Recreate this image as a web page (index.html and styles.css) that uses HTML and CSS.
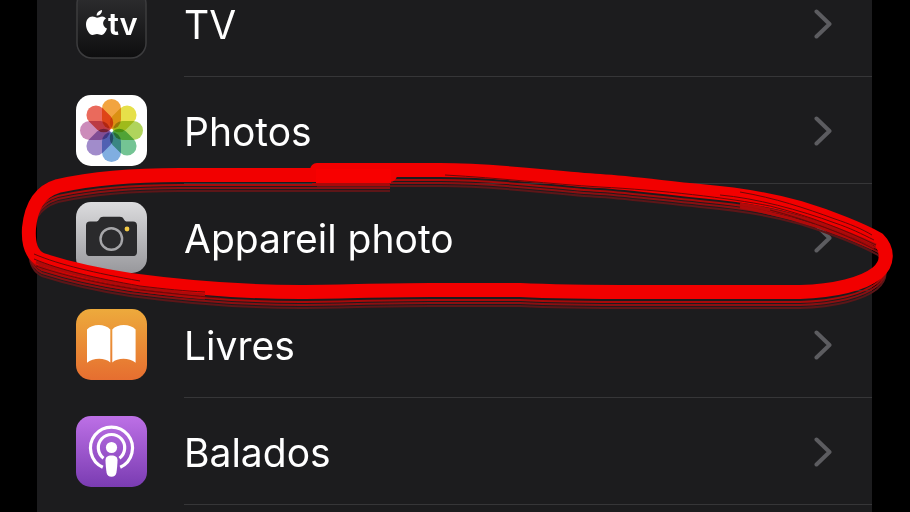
FILE: index.html
```html
<!DOCTYPE html>
<html lang="fr">
<head>
    <meta charset="UTF-8">
    <meta name="viewport" content="width=device-width, initial-scale=1.0">
    <title>Réglages</title>
    <link rel="stylesheet" href="styles.css">
</head>
<body>
    <div id="wrap">
        <ul class="list">
            <!-- TV -->
            <li>
                <a class="row" href="#tv">
                    <svg class="icon" viewBox="0 0 71 71" aria-hidden="true">
                        <defs>
                            <linearGradient id="tvBg" x1="0" y1="0" x2="0" y2="1">
                                <stop offset="0" stop-color="#303032"/>
                                <stop offset="1" stop-color="#0e0e0f"/>
                            </linearGradient>
                        </defs>
                        <rect x="1" y="1" width="69" height="69" rx="15" fill="url(#tvBg)" stroke="#3c3c3e" stroke-width="1.5"/>
                        <path fill="#fff" d="M26 22c.3 3-2.300 5.700-5.300 5.700C20.400 25 23 22.300 26 22zM30 30.500c-4.300 2.500-3.500 8.300 1 10-1.200 3.300-3.300 6.500-5.500 6.500-1.800 0-2.500-1-4.500-1s-2.800 1-4.500 1C13 47 10 41 10 36.600c0-5 3-8.100 6.400-8.100 2 0 3.400 1.200 4.800 1.200 1.300 0 2.800-1.300 5-1.300 1.500 0 2.900.7 3.800 2.100z"/>
                        <text class="tv-mark" x="32" y="47">tv</text>
                    </svg>
                    <span class="label">TV</span>
                    <svg class="arrow" viewBox="0 0 18 30" aria-hidden="true"><path d="M2.500 2.500L15.500 15L2.500 27.500"/></svg>
                </a>
            </li>
            <!-- Photos -->
            <li>
                <a class="row" href="#photos">
                    <svg class="icon" viewBox="0 0 71 71" aria-hidden="true">
                        <rect width="71" height="71" rx="15" fill="#fff"/>
                        <g class="petals">
                            <rect x="26" y="4" width="19" height="30" rx="9.500" fill="#f2a440"/>
                            <rect x="26" y="4" width="19" height="30" rx="9.500" fill="#e6e04a" transform="rotate(45 35.500 35.500)"/>
                            <rect x="26" y="4" width="19" height="30" rx="9.500" fill="#b0d45c" transform="rotate(90 35.500 35.500)"/>
                            <rect x="26" y="4" width="19" height="30" rx="9.500" fill="#74c494" transform="rotate(135 35.500 35.500)"/>
                            <rect x="26" y="4" width="19" height="30" rx="9.500" fill="#80aee0" transform="rotate(180 35.500 35.500)"/>
                            <rect x="26" y="4" width="19" height="30" rx="9.500" fill="#a18ccb" transform="rotate(225 35.500 35.500)"/>
                            <rect x="26" y="4" width="19" height="30" rx="9.500" fill="#cc8cba" transform="rotate(270 35.500 35.500)"/>
                            <rect x="26" y="4" width="19" height="30" rx="9.500" fill="#ea6a5c" transform="rotate(315 35.500 35.500)"/>
                        </g>
                    </svg>
                    <span class="label">Photos</span>
                    <svg class="arrow" viewBox="0 0 18 30" aria-hidden="true"><path d="M2.500 2.500L15.500 15L2.500 27.500"/></svg>
                </a>
            </li>
            <!-- Appareil photo -->
            <li>
                <a class="row" href="#appareil-photo">
                    <svg class="icon" viewBox="0 0 71 71" aria-hidden="true">
                        <defs>
                            <linearGradient id="cameraBg" x1="0" y1="0" x2="0" y2="1">
                                <stop offset="0" stop-color="#dcdcde"/>
                                <stop offset="1" stop-color="#98989c"/>
                            </linearGradient>
                        </defs>
                        <rect width="71" height="71" rx="15" fill="url(#cameraBg)"/>
                        <path fill="#2a2a2c" d="M14 19.500h5.500c2 0 2.800-.8 3.700-2.300 1-1.700 2-2.400 4-2.400h16.600c2 0 3 .7 4 2.400.9 1.500 1.700 2.300 3.700 2.300H57c2.700 0 4 1.400 4 4V50c0 2.700-1.300 4-4 4H14c-2.700 0-4-1.300-4-4V23.500c0-2.600 1.300-4 4-4z"/>
                        <circle cx="35.300" cy="37" r="10.800" fill="none" stroke="#a6a6a9" stroke-width="2.400"/>
                        <circle cx="51" cy="27" r="2.400" fill="#f3c944"/>
                    </svg>
                    <span class="label">Appareil photo</span>
                    <svg class="arrow" viewBox="0 0 18 30" aria-hidden="true"><path d="M2.500 2.500L15.500 15L2.500 27.500"/></svg>
                </a>
            </li>
            <!-- Livres -->
            <li>
                <a class="row" href="#livres">
                    <svg class="icon" viewBox="0 0 71 71" aria-hidden="true">
                        <defs>
                            <linearGradient id="booksBg" x1="0" y1="0" x2="0" y2="1">
                                <stop offset="0" stop-color="#edaa3c"/>
                                <stop offset="1" stop-color="#e66e30"/>
                            </linearGradient>
                        </defs>
                        <rect width="71" height="71" rx="15" fill="url(#booksBg)"/>
                        <path fill="#fff" d="M11 20.500C16 14.500 29.500 14.500 34.300 20.500V53.500C29 48.500 17 48.500 11 53.800z"/>
                        <path fill="#fff" d="M36.300 20.500C41 14.500 54.500 14.500 59.600 20.500V53.800C53.500 48.500 41.500 48.500 36.300 53.500z"/>
                    </svg>
                    <span class="label">Livres</span>
                    <svg class="arrow" viewBox="0 0 18 30" aria-hidden="true"><path d="M2.500 2.500L15.500 15L2.500 27.500"/></svg>
                </a>
            </li>
            <!-- Balados -->
            <li>
                <a class="row" href="#balados">
                    <svg class="icon" viewBox="0 0 71 71" aria-hidden="true">
                        <defs>
                            <linearGradient id="podcastBg" x1="0" y1="0" x2="0" y2="1">
                                <stop offset="0" stop-color="#bd70e6"/>
                                <stop offset="1" stop-color="#7a3cb2"/>
                            </linearGradient>
                        </defs>
                        <rect width="71" height="71" rx="15" fill="url(#podcastBg)"/>
                        <g fill="none" stroke="#fff" stroke-width="3.200">
                            <path d="M26.800 51.200A21 21 0 1 1 44.200 51.200"/>
                            <path d="M27.500 42.200A13.200 13.200 0 1 1 43.500 42.200"/>
                        </g>
                        <circle cx="35.500" cy="31.500" r="5.600" fill="#fff"/>
                        <path fill="#fff" d="M35.500 39.500c4 0 6 1.500 6 4.800 0 3-.5 9-1.100 12.500-.5 2.600-2.200 3.900-4.900 3.900s-4.400-1.300-4.900-3.900c-.6-3.500-1.100-9.500-1.100-12.500 0-3.300 2-4.800 6-4.800z"/>
                    </svg>
                    <span class="label">Balados</span>
                    <svg class="arrow" viewBox="0 0 18 30" aria-hidden="true"><path d="M2.500 2.500L15.500 15L2.500 27.500"/></svg>
                </a>
            </li>
        </ul>

        <!-- red brush loop -->
        <svg class="brush" viewBox="0 0 910 512" preserveAspectRatio="none" aria-hidden="true">
            <defs>
                <path id="loop" d="M390 175H180C130 175 85 180 58 186C38 192 31 208 29 228C28 244 31 255 42 260C70 269 98 275 130 280C175 286 240 292 300 292C340 292 380 290 430 290H520C560 292 600 292 640 292H800C835 291 863 284 877 273C888 264 889 250 878 239C862 230 830 217 800 208C765 198 735 194 700 191C660 187 630 183 600 181C550 178 500 170 440 170H317"/>
            </defs>
            <use href="#loop" class="hair dim" y="16"/>
            <use href="#loop" class="hair mid" y="13"/>
            <use href="#loop" class="hair" y="10"/>
            <use href="#loop" class="solid"/>
            <path class="overlap" d="M316 176H391"/>
            <path class="hair" d="M312 184H389"/>
            <!-- streaks where the bristles spread apart -->
            <g class="spread">
                <path d="M740 204C790 212 835 226 876 245"/>
                <path d="M740 207C790 216 835 231 874 249"/>
                <path d="M38 266C66 277 98 284 135 290C160 293 180 296 205 298"/>
                <path d="M36 262C66 273 98 280 135 287C160 290 180 293 205 295"/>
            </g>
            <g class="gap">
                <path d="M445 175C500 178 550 184 600 187C660 190 730 198 770 206C810 216 845 230 876 245"/>
                <path d="M740 192C775 198 805 208 835 219C850 224 862 229 872 235"/>
                <path d="M720 195C755 198 800 210 835 223C850 228 862 234 874 240"/>
                <path d="M770 210C805 219 845 234 876 250"/>
                <path d="M34 254C60 265 95 273 140 281"/>
                <path d="M34 259C60 270 95 278 140 286C165 289 185 291 205 292"/>
                <path d="M36 266C62 275 95 283 140 290C165 293 195 296 220 298"/>
            </g>
        </svg>
    </div>
</body>
</html>
```
FILE: styles.css
```css
*{
    margin: 0;
    padding: 0;
    box-sizing: border-box;
}
body{
    background: #000;
    font-family: Inter, "Liberation Sans", sans-serif;
}
#wrap{
    position: relative;
    height: 100vh;
    overflow: hidden;
    padding: 0 38px 0 37px;
}
/* the list is scrolled a little past its first row */
.list{
    list-style: none;
    margin-top: -30px;
    min-height: calc(100vh + 30px);
    background: #1c1c1e;
}
.row{
    position: relative;
    display: flex;
    align-items: center;
    gap: 37px;
    height: 107px;
    padding: 0 40px 0 39px;
    color: #fff;
    text-decoration: none;
}
.row::after{
    content: "";
    position: absolute;
    left: 147px;
    right: 0;
    bottom: 0;
    height: 1px;
    background: #363638;
}
.icon{
    flex: none;
    width: 71px;
    height: 71px;
}
.tv-mark{
    fill: #fff;
    font-size: 31px;
    font-weight: 600;
}
.petals{
    isolation: isolate;
}
.petals rect{
    mix-blend-mode: multiply;
}
.label{
    flex: 1;
    padding-top: 2px;
    font-size: 39px;
    line-height: 48px;
}
.arrow{
    flex: none;
    width: 18px;
    height: 30px;
    fill: none;
    stroke: #5c5c60;
    stroke-width: 4;
    stroke-linecap: round;
    stroke-linejoin: round;
}
.brush{
    position: absolute;
    left: 0;
    top: 0;
    width: 100%;
    height: 512px;
    fill: none;
    pointer-events: none;
}
.solid{
    stroke: #f20000;
    stroke-width: 14;
    stroke-linecap: round;
    stroke-linejoin: round;
}
.hair{
    stroke: #a80a0a;
    stroke-width: 2;
}
.hair.mid{
    stroke: #8a1012;
}
.hair.dim{
    stroke: #5c1618;
}
.overlap{
    stroke: #f80000;
    stroke-width: 14;
}
.spread{
    stroke: #b00a0a;
    stroke-width: 3;
}
.gap{
    stroke: #6a0808;
    stroke-width: 1;
}
```
